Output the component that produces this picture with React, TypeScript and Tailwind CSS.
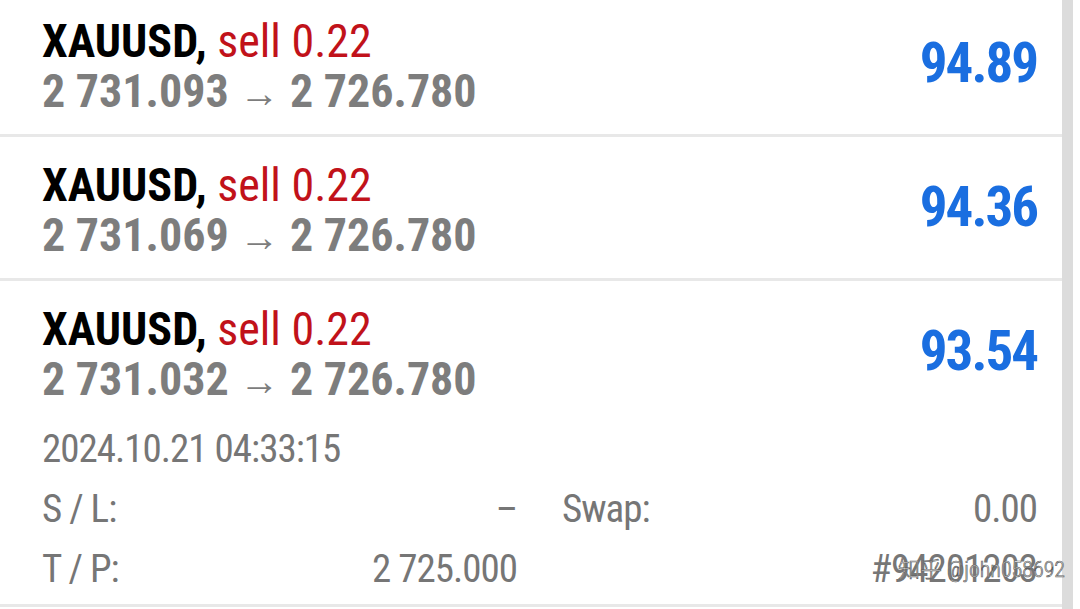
import React from "react";

interface Position {
    id: number;
    open: string;
    current: string;
    profit: string;
    expanded?: boolean;
}

const positions: Position[] = [
    { id: 1, open: "2 731.093", current: "2 726.780", profit: "94.89" },
    { id: 2, open: "2 731.069", current: "2 726.780", profit: "94.36" },
    { id: 3, open: "2 731.032", current: "2 726.780", profit: "93.54", expanded: true },
];

const PositionRow = ({ pos }: { pos: Position }) => {
    return (
        <div className="border-b-[3px] border-[#e8e8e8]">
            {/* Header: symbol, type, prices, profit */}
            <div className="h-[141px] flex items-center justify-between pl-[42px] pr-[25px]">
                <div className="self-start pt-[23px] leading-[50px] text-[46px]">
                    <div className="whitespace-nowrap">
                        <span className="font-bold text-black">XAUUSD,</span>{" "}
                        <span className="text-[#c1121a]">sell 0.22</span>
                    </div>
                    <div className="whitespace-nowrap font-bold text-[#7d7d7d]">
                        {pos.open} <span className="font-normal text-[40px]">→</span> {pos.current}
                    </div>
                </div>
                <div className="text-[55px] font-bold tracking-[-2px] text-[#1a6ee0]">{pos.profit}</div>
            </div>

            {/* Details for the opened position */}
            {pos.expanded && (
                <div className="-mt-[3px] pb-[5px] pl-[42px] pr-[25px] text-[39px] leading-[60px] tracking-[-1px] text-[#767676]">
                    <div>2024.10.21 04:33:15</div>
                    <div className="grid grid-cols-2 gap-x-[45px]">
                        <div className="flex justify-between">
                            <span>S / L:</span>
                            <span>–</span>
                        </div>
                        <div className="flex justify-between">
                            <span>Swap:</span>
                            <span>0.00</span>
                        </div>
                        <div className="flex justify-between">
                            <span>T / P:</span>
                            <span>2 725.000</span>
                        </div>
                        <div className="flex justify-end">
                            <span>#94201203</span>
                        </div>
                    </div>
                </div>
            )}
        </div>
    );
};

export default function App() {
    return (
        <div className="relative w-[1080px] h-[609px] overflow-hidden bg-white flex font-['Roboto',sans-serif] font-stretch-condensed">
            <div className="w-[1062px] -mt-[7px]">
                {positions.map(pos => (
                    <PositionRow key={pos.id} pos={pos} />
                ))}
            </div>
            {/* scroll indicator */}
            <div className="w-[11px] h-full bg-[#dcdcdc]" />

            {/* watermark */}
            <div className="absolute left-[898px] top-[555px] whitespace-nowrap text-[22px] leading-[30px] text-white font-['Roboto','Noto_Sans_CJK_SC',sans-serif] font-light [-webkit-text-stroke:0.7px_#5e5e5e]">
                知乎 @john058692
            </div>
        </div>
    );
}
